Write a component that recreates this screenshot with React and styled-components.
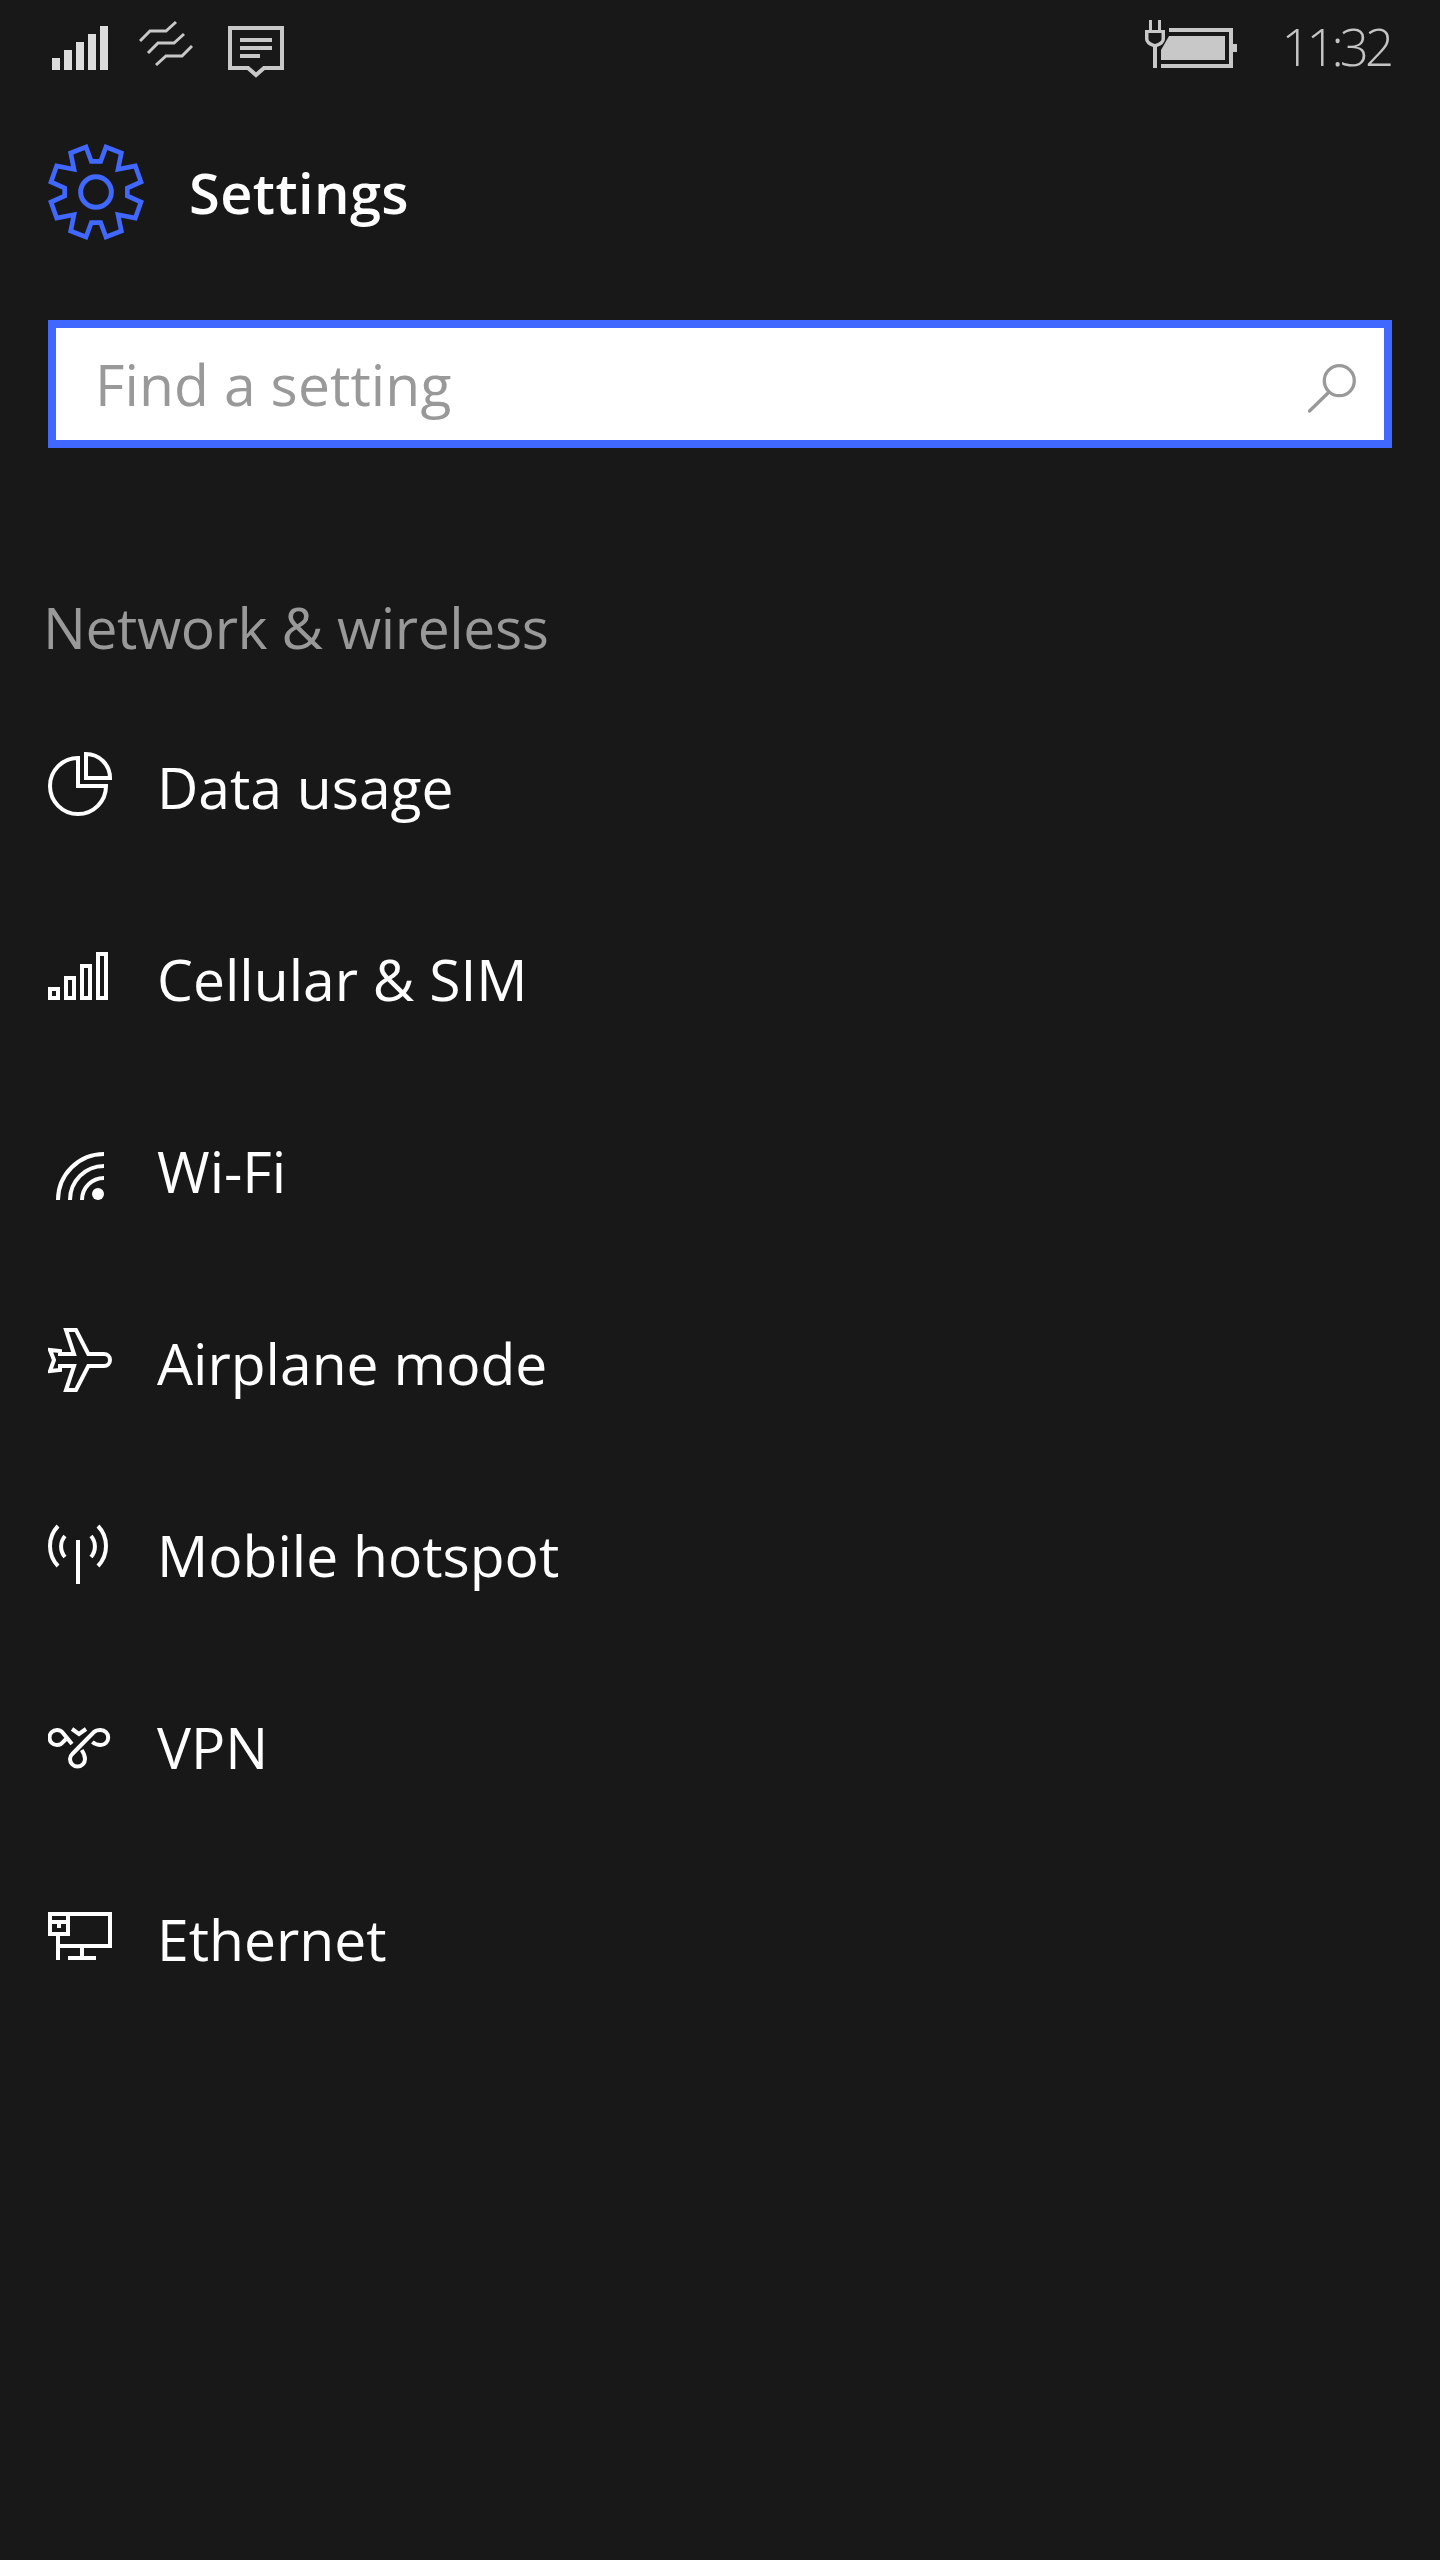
import React from "react";
import styled, { createGlobalStyle } from "styled-components";

const Global = createGlobalStyle`
  html, body { margin: 0; padding: 0; background: #181818; }
  body { font-family: "Open Sans", "Noto Sans", sans-serif; }
`;

const Page = styled.div`
  width: 1440px;
  height: 2560px;
  background: #181818;
  overflow: hidden;
`;

const StatusBar = styled.header`
  display: flex;
  height: 96px;
  padding: 0 50px 0 52px;
  box-sizing: border-box;
  color: #c8c8c8;
`;

const StatusIcon = styled.svg`
  height: 96px;
  width: ${(p) => p.$w}px;
  margin-left: ${(p) => p.$gap || 0}px;
  flex: none;
`;

const Spacer = styled.div`
  flex: 1;
`;

const Clock = styled.div`
  margin-left: 44px;
  font-size: 51px;
  font-weight: 300;
  line-height: 92px;
  letter-spacing: -4px;
  color: #c4c4c4;
`;

const Header = styled.div`
  display: flex;
  align-items: center;
  gap: 45px;
  height: 96px;
  margin-top: 48px;
  padding-left: 48px;
`;

const Title = styled.h1`
  margin: 0;
  font-size: 56px;
  font-weight: 600;
  line-height: 64px;
  letter-spacing: 0.4px;
  color: #fff;
`;

const SearchBox = styled.div`
  display: flex;
  align-items: center;
  justify-content: space-between;
  box-sizing: border-box;
  height: 128px;
  margin: 80px 48px 0;
  padding: 0 22px 0 39px;
  border: 8px solid #4068ff;
  background: #fff;
`;

const Placeholder = styled.span`
  font-size: 57px;
  font-weight: 400;
  line-height: 64px;
  letter-spacing: 0.1px;
  color: #999;
`;

const SearchIcon = styled.svg`
  width: 54px;
  height: 60px;
  flex: none;
`;

const SectionTitle = styled.h2`
  margin: 147px 0 29px;
  padding-left: 43px;
  font-size: 57px;
  font-weight: 400;
  line-height: 64px;
  letter-spacing: -0.4px;
  color: #999;
`;

const List = styled.ul`
  list-style: none;
  margin: 0;
  padding: 0;
`;

const Row = styled.li`
  display: flex;
  align-items: center;
  height: 192px;
  padding-left: 48px;
  color: #fff;
`;

const RowIcon = styled.svg`
  width: 64px;
  height: 64px;
  flex: none;
  fill: none;
  stroke: currentColor;
  stroke-width: 4;
`;

const RowLabel = styled.span`
  margin: 6px 0 0 45px;
  font-size: 57px;
  font-weight: 400;
  line-height: 64px;
  letter-spacing: 0;
`;

const rows = [
  {
    label: "Data usage",
    top: 752,
    art: (
      <>
        <path d="M78 758V786H106A28 28 0 1 1 78 758Z" />
        <path d="M86 754V778H110A24 24 0 0 0 86 754Z" />
      </>
    ),
  },
  {
    label: "Cellular & SIM",
    top: 944,
    art: (
      <>
        <rect x="50" y="989" width="8" height="9" />
        <rect x="66" y="978" width="8" height="20" />
        <rect x="82" y="966" width="8" height="32" />
        <rect x="98" y="954" width="8" height="44" />
      </>
    ),
  },
  {
    label: "Wi-Fi",
    top: 1136,
    art: (
      <>
        <path d="M58 1200A46 46 0 0 1 104 1154" />
        <path d="M70 1200A34 34 0 0 1 104 1166" />
        <path d="M82 1200A22 22 0 0 1 104 1178" />
        <circle cx="98" cy="1194" r="6" fill="currentColor" stroke="none" />
      </>
    ),
  },
  {
    label: "Airplane mode",
    top: 1328,
    art: (
      <path d="M66 1330H76L88.3 1354H104A6 6 0 0 1 104 1366H88.3L76 1390H66L74 1366H60V1370L50 1371L54 1360L50 1350L60 1351V1354H74Z" />
    ),
  },
  {
    label: "Mobile hotspot",
    top: 1520,
    art: (
      <>
        <path d="M78 1540V1584" />
        <path d="M58 1526A29 29 0 0 0 58 1566" />
        <path d="M65 1536A16 16 0 0 0 65 1557" />
        <path d="M91 1536A16 16 0 0 1 91 1557" />
        <path d="M98 1526A29 29 0 0 1 98 1566" />
      </>
    ),
  },
  {
    label: "VPN",
    top: 1712,
    art: (
      <>
        <path d="M72 1729L79 1734L86 1729" />
        <path d="M72 1744L63 1733Q61 1730 57 1730A7.5 7.5 0 0 0 57 1745Q61 1745 63 1742L68 1737" />
        <path d="M92.3 1742Q96 1745 100.7 1745A7.5 7.5 0 0 0 100.7 1730Q96 1730 94 1732L72.3 1754Q70 1756 70 1759A7.5 7.5 0 0 0 85 1759Q85 1755 81.7 1750" />
      </>
    ),
  },
  {
    label: "Ethernet",
    top: 1904,
    art: (
      <>
        <rect x="50" y="1914" width="18" height="20" />
        <path d="M52 1922H66M59 1924V1928" />
        <path d="M68 1914H110V1946H60M58 1936V1960M82 1948V1956M68 1958H96" />
      </>
    ),
  },
];

export default function App() {
  return (
    <Page>
      <Global />
      <StatusBar>
        <StatusIcon $w={56} viewBox="52 0 56 96" fill="#dcdcdc">
          <rect x="52" y="58" width="8" height="12" />
          <rect x="64" y="50" width="8" height="20" />
          <rect x="76" y="42" width="8" height="28" />
          <rect x="88" y="34" width="8" height="36" />
          <rect x="100" y="26" width="8" height="44" />
        </StatusIcon>
        <StatusIcon $w={54} $gap={31} viewBox="139 0 54 96" fill="none" stroke="#c8c8c8" strokeWidth="3">
          <path d="M140 41L150 31H166L176 22" />
          <path d="M148 53L158 43H174L184 34" />
          <path d="M156 65L166 56H182L192 46" />
        </StatusIcon>
        <StatusIcon $w={56} $gap={35} viewBox="228 0 56 96">
          <path d="M230 28H282V68H264L256 75L248 68H230Z" fill="none" stroke="#c8c8c8" strokeWidth="4" />
          <path d="M240 38H272V42H240ZM240 46H272V50H240ZM240 54H260V58H240Z" fill="#c8c8c8" />
        </StatusIcon>
        <Spacer />
        <StatusIcon $w={92} viewBox="1144 0 92 96" fill="#c8c8c8">
          <path d="M1148 20H1151V30H1157V20H1160V30H1164V39Q1164 44 1156 47V68H1152V47Q1144 44 1144 39V30H1148ZM1147.5 33V39Q1147.5 42 1154 44Q1160.5 42 1160.5 39V33Z" fillRule="evenodd" />
          <path d="M1168 28H1232V44H1236V52H1232V68H1160V64H1228V32H1168Z" />
          <path d="M1168 36H1224V60H1160V50Z" />
        </StatusIcon>
        <Clock>11:32</Clock>
      </StatusBar>

      <Header>
        <svg width="96" height="96" viewBox="-144 -144 288 288" fill="none" stroke="#4068ff" strokeWidth="14">
          <path d="M-14 -92H14L30 -135L76 -117L66 -68L118 -78L135 -30L94 -12V12L135 30L118 78L66 68L76 117L30 135L14 92H-14L-30 135L-76 117L-66 68L-118 78L-135 30L-94 12V-12L-135 -30L-118 -78L-66 -68L-76 -117L-30 -135Z" />
          <circle r="46" strokeWidth="15" />
        </svg>
        <Title>Settings</Title>
      </Header>

      <SearchBox>
        <Placeholder>Find a setting</Placeholder>
        <SearchIcon viewBox="1308 350 54 60" fill="none" stroke="#999" strokeWidth="3.3">
          <circle cx="1339.3" cy="376.7" r="15" />
          <path d="M1328 389L1309.5 407" strokeLinecap="round" />
        </SearchIcon>
      </SearchBox>

      <SectionTitle>Network &amp; wireless</SectionTitle>

      <List>
        {rows.map((r) => (
          <Row key={r.label}>
            <RowIcon viewBox={`48 ${r.top} 64 64`}>{r.art}</RowIcon>
            <RowLabel>{r.label}</RowLabel>
          </Row>
        ))}
      </List>
    </Page>
  );
}
